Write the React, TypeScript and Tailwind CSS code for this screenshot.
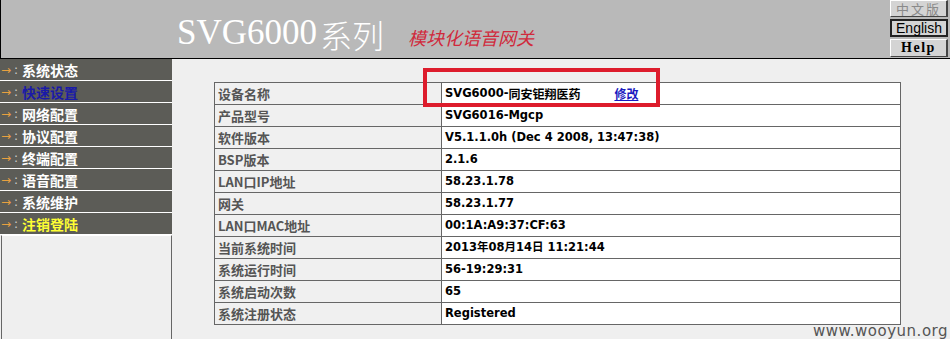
import React from "react";

const menu = [
  { t: "系统状态", c: "text-white" },
  { t: "快速设置", c: "text-[#1a1aa8]" },
  { t: "网络配置", c: "text-white" },
  { t: "协议配置", c: "text-white" },
  { t: "终端配置", c: "text-white" },
  { t: "语音配置", c: "text-white" },
  { t: "系统维护", c: "text-white" },
  { t: "注销登陆", c: "text-[#ffff33]" },
];

const rows: [string, React.ReactNode][] = [
  ["设备名称", null],
  ["产品型号", "SVG6016-Mgcp"],
  ["软件版本", "V5.1.1.0h (Dec 4 2008, 13:47:38)"],
  ["BSP版本", "2.1.6"],
  ["LAN口IP地址", "58.23.1.78"],
  ["网关", "58.23.1.77"],
  ["LAN口MAC地址", "00:1A:A9:37:CF:63"],
  ["当前系统时间", "2013年08月14日 11:21:44"],
  ["系统运行时间", "56-19:29:31"],
  ["系统启动次数", "65"],
  ["系统注册状态", "Registered"],
];

export default function App() {
  return (
    <div className="relative w-[950px] h-[339px] overflow-hidden bg-[#efefef]">
      {/* header */}
      <div className="h-[59px] bg-[#b9b9b9] border-l border-b border-black flex">
        <div className="flex items-end pl-[176px] pb-[8px]">
          <span className="text-white text-[35px] leading-none font-['Liberation_Serif',serif]">
            SVG6000
          </span>
          <span className="text-white text-[32px] leading-none ml-[3px] font-light font-['Noto_Sans_CJK_SC',serif]">
            系列
          </span>
          <span className="text-[#d02a3c] text-[18px] leading-none ml-[24px] mb-[4px] italic font-['Noto_Sans_CJK_SC',serif]">
            模块化语音网关
          </span>
        </div>
        <div className="ml-auto mr-[2px] flex flex-col gap-[2px] w-[58px]">
          <div className="h-[17px] bg-[#d4d4d4] border-t border-l border-white border-r-2 border-b border-r-[#444] border-b-[#444] flex items-center justify-center text-[13px] text-[#8a8a8a] leading-none tracking-[2px] font-['Noto_Sans_CJK_SC',sans-serif]">
            中文版
          </div>
          <div className="h-[18px] bg-[#d4d4d4] border-2 border-[#222] flex items-center justify-center text-[14px] text-black leading-none font-['Liberation_Sans',sans-serif]">
            English
          </div>
          <div className="h-[18px] bg-[#d4d4d4] border-t border-l border-white border-r-2 border-b border-r-[#444] border-b-[#444] flex items-center justify-center text-[14px] text-black leading-none font-bold tracking-[1.5px] font-['Liberation_Serif',serif]">
            Help
          </div>
        </div>
      </div>

      <div className="flex">
        {/* sidebar */}
        <div className="w-[172px] flex flex-col h-[280px]">
          {menu.map((m) => (
            <div key={m.t} className="h-[22px] bg-[#5c5c57] border-b border-white flex items-center">
              <span className="text-[#e8a040] text-[12px] ml-[1px] leading-none font-['DejaVu_Sans',sans-serif]">→</span>
              <span className="text-[#cfcfcf] text-[12px] ml-[3px] leading-none font-['DejaVu_Sans',sans-serif]">:</span>
              <span className={`ml-[4px] text-[14px] font-bold leading-none font-['Noto_Sans_CJK_SC',sans-serif] ${m.c}`}>
                {m.t}
              </span>
            </div>
          ))}
          <div className="flex-1 ml-[1px] border-l border-r border-[#666] border-t border-t-white bg-[#efefef]" />
        </div>

        {/* content */}
        <div className="pl-[42px] pt-[23px]">
          <table className="border-collapse w-[687px]">
            <tbody>
              {rows.map(([k, v], i) => (
                <tr key={i} className="h-[22px]">
                  <td className="w-[227px] border border-[#666] bg-[#f0f0f0] px-[3px] py-0 text-[13px] font-bold text-[#555] leading-none align-middle font-['Noto_Sans_CJK_SC',sans-serif]">
                    {k}
                  </td>
                  <td className="border border-[#666] bg-white px-[3px] py-0 text-[11.5px] font-bold text-black leading-none align-middle font-['DejaVu_Sans','Noto_Sans_CJK_SC',sans-serif]">
                    {i === 0 ? (
                      <span className="flex items-center">
                        <span>SVG6000-</span>
                        <span className="text-[12px] font-['Noto_Sans_CJK_SC',sans-serif]">同安钜翔医药</span>
                        <a className="ml-[34px] text-[#1a1ac0] underline text-[12px] font-['Noto_Sans_CJK_SC',sans-serif]">修改</a>
                      </span>
                    ) : (
                      v
                    )}
                  </td>
                </tr>
              ))}
            </tbody>
          </table>
        </div>
      </div>

      {/* annotation box */}
      <div className="absolute left-[423px] top-[68px] w-[237px] h-[39px] border-[4px] border-[#dd1c2c]" />

      {/* watermark */}
      <div className="absolute right-[2px] bottom-0 text-[15px] text-[#555] leading-none tracking-[0.5px] font-['DejaVu_Sans',sans-serif]">
        www.wooyun.org
      </div>
    </div>
  );
}
